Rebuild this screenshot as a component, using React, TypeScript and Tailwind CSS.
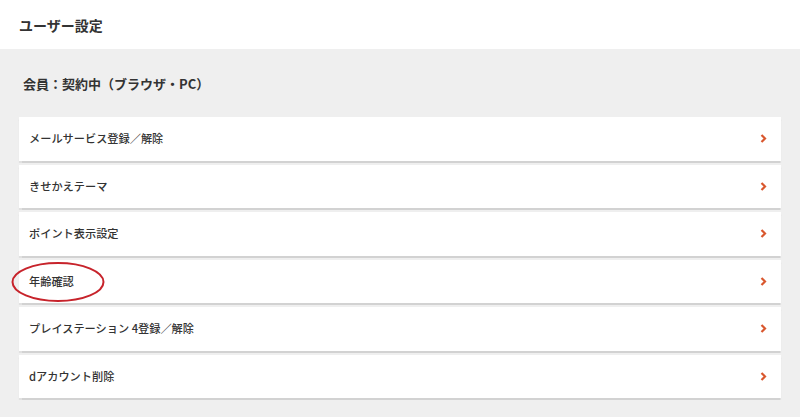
const items = [
  'メールサービス登録／解除',
  'きせかえテーマ',
  'ポイント表示設定',
  '年齢確認',
  'プレイステーション 4登録／解除',
  'dアカウント削除',
];

function Chevron() {
  return (
    <svg width="7" height="9" viewBox="0 0 7 9" className="shrink-0">
      <path d="M1.5 1 L5 4.5 L1.5 8" fill="none" stroke="#d9572e" strokeWidth="2.2" />
    </svg>
  );
}

export default function App() {
  return (
    <div
      className="w-[800px] h-[417px] bg-[#efefef] text-[#333]"
      style={{ fontFamily: '"Noto Sans CJK JP", "Noto Sans", sans-serif' }}
    >
      {/* ヘッダー */}
      <div className="h-[49px] bg-white flex items-center px-[19px]">
        <h1 className="text-[14px] font-bold leading-none">ユーザー設定</h1>
      </div>

      <div className="px-[19px]">
        <div className="h-[68px] flex items-center pl-[4px]">
          <p className="text-[13px] font-bold leading-none">会員：契約中（ブラウザ・PC）</p>
        </div>

        <div className="flex flex-col gap-[4px] w-[762px]">
          {items.map((name) => (
            <div
              key={name}
              className="relative h-[43.5px] bg-white flex items-center justify-between pl-[10px] pr-[14px] shadow-[0_1.5px_1px_rgba(0,0,0,0.12)]"
            >
              <span className="text-[11.2px] font-medium leading-none whitespace-pre">{name}</span>
              <Chevron />
              {name === '年齢確認' && (
                <svg
                  className="absolute left-[-8px] top-[1px] pointer-events-none"
                  width="96"
                  height="42"
                  viewBox="0 0 96 42"
                >
                  <ellipse cx="47" cy="21" rx="45.5" ry="19" fill="none" stroke="#c7232b" strokeWidth="2" />
                </svg>
              )}
            </div>
          ))}
        </div>
      </div>
    </div>
  );
}
